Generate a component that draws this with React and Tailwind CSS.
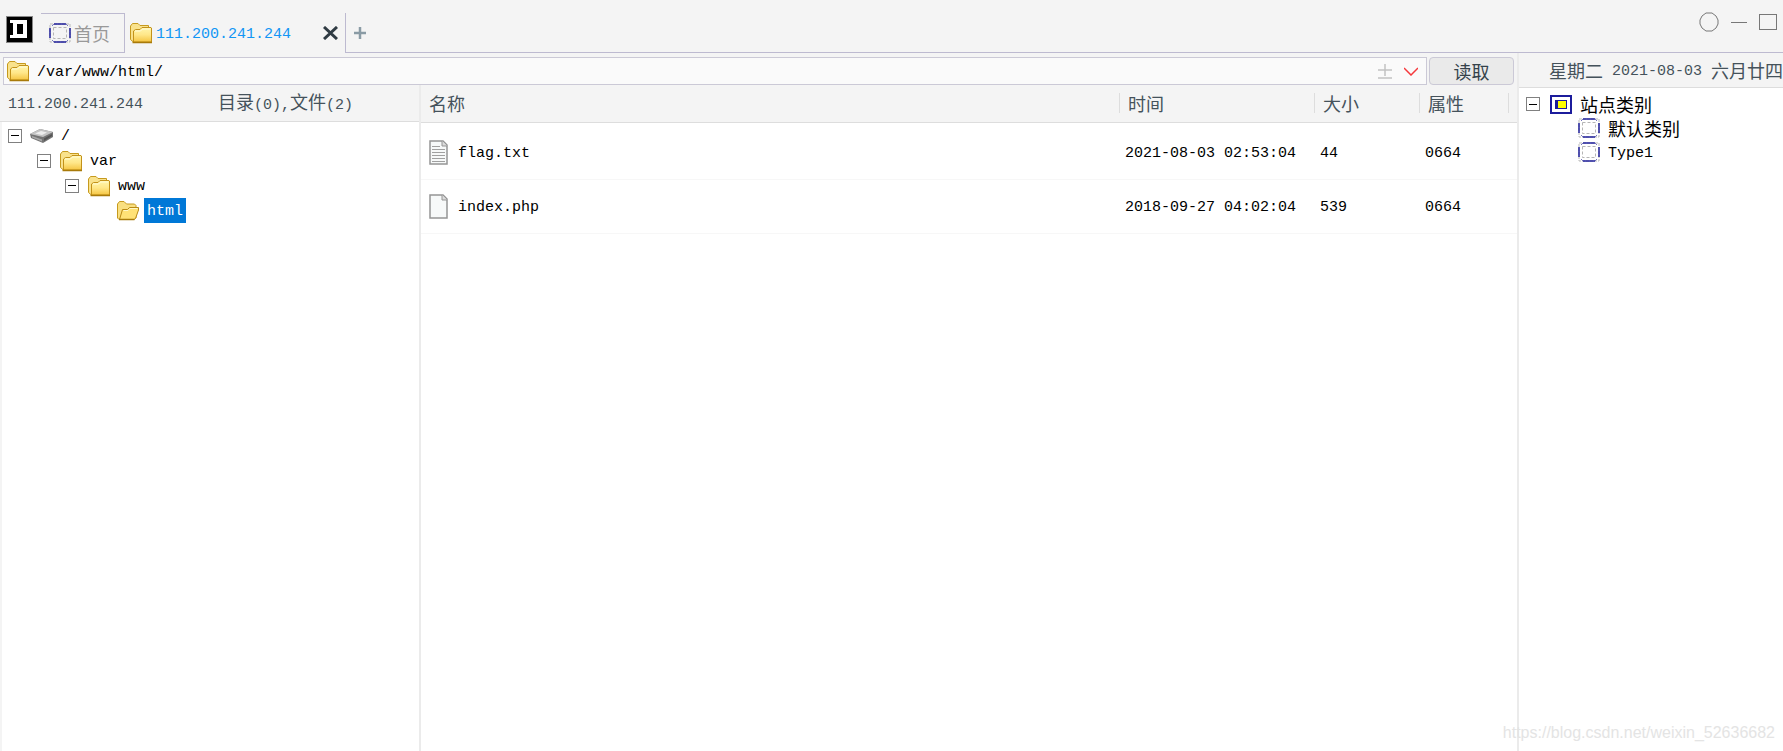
const mono = 'font-["Liberation_Mono","Noto_Sans_CJK_SC",monospace] text-[15px]'
const cjk = 'font-["Noto_Sans_CJK_SC",sans-serif] text-[18px]'

const files = [
  { name: 'flag.txt', time: '2021-08-03 02:53:04', size: '44', mode: '0664', lines: true },
  { name: 'index.php', time: '2018-09-27 04:02:04', size: '539', mode: '0664', lines: false },
]

const tree = [
  { name: '/', pad: 'pl-1.5', icon: 'drive' },
  { name: 'var', pad: 'pl-[35px]', icon: 'folder' },
  { name: 'www', pad: 'pl-[63px]', icon: 'folder' },
  { name: 'html', pad: 'pl-[106px]', icon: 'open', selected: true },
]

function FolderIcon() {
  return (
    <svg width="24" height="22" viewBox="0 0 24 22" className="shrink-0">
      <defs>
        <linearGradient id="folder-front" x1="0" y1="0" x2="0" y2="1">
          <stop offset="0" stopColor="#fff6ae" />
          <stop offset="0.5" stopColor="#ffe789" />
          <stop offset="1" stopColor="#f5c542" />
        </linearGradient>
      </defs>
      <path d="M1.5 17.5V4L3.5 1.5H9L11 3.5H19.5V8L5 20.5Z" fill="#f9e28c" stroke="#c69a1e" />
      <path d="M4.5 20V9L6.5 7.5H11L13 5.5H22L22.5 6V20Z" fill="url(#folder-front)" stroke="#c3921a" />
      <path d="M6 9H11.5L13.5 7H21" fill="none" stroke="#fffbd6" />
      <path d="M3.5 20.5H23" stroke="#a87a0a" strokeWidth="1.5" />
    </svg>
  )
}

function OpenFolderIcon() {
  return (
    <svg width="24" height="22" viewBox="0 0 24 22" className="shrink-0">
      <path d="M1.5 18V4L3.5 1.5H8L10.5 4H18.5L20 5.5V18L3 19.5Z" fill="#f9df80" stroke="#c69a1e" />
      <path d="M3.5 19.5L6.5 9.5H11.5L13.5 7.5H22.5V10L19.5 18.5L18 19.5Z" fill="#ffe276" stroke="#b98a14" />
      <path d="M7.5 10.5H12L14 8.5H21.5" fill="none" stroke="#fff8c8" />
      <path d="M3 19.5H18.5" stroke="#a87c0c" strokeWidth="1.5" />
    </svg>
  )
}

function DriveIcon() {
  return (
    <svg width="24" height="16" viewBox="0 0 24 16" className="shrink-0">
      <path d="M0 6L10 1L23 4V9L13 15L1 10Z" fill="#747474" />
      <path d="M0 6L10 1L23 4L13 9Z" fill="#c4c4c4" />
      <path d="M5 5.5L11 3L17 4.5L12 7Z" fill="#ededed" />
      <path d="M2 8L12 11.5V13.5L2 9.5Z" fill="#a8a8a8" />
      <path d="M14 10.5L22 6V8L14 13Z" fill="#555" />
    </svg>
  )
}

function DashedIcon() {
  return (
    <svg width="22" height="20" viewBox="0 0 22 20" fill="none" className="shrink-0">
      <rect x="1" y="1" width="20" height="18" stroke="#b9b9b9" strokeDasharray="3 1" />
      <rect x="4.5" y="4.5" width="13" height="11" stroke="#b5b5b5" strokeDasharray="3 2" />
      <path d="M5 1H17M5 19H17M1 5V15M21 5V15" stroke="#20209c" strokeWidth="1.5" />
      <path d="M3 3L5 1M17 1L19 3M3 17L5 19M17 19L19 17" stroke="#7777bd" />
    </svg>
  )
}

function SiteIcon() {
  return (
    <svg width="22" height="19" viewBox="0 0 22 19" className="shrink-0">
      <rect x="1" y="1" width="20" height="17" fill="#fff" stroke="#1c1c9c" strokeWidth="2" />
      <rect x="5" y="5" width="12" height="9" fill="#1c1c9c" />
      <rect x="8" y="6" width="8" height="7" fill="#ff0" />
    </svg>
  )
}

function FileIcon({ lines }) {
  return (
    <svg width="19" height="25" viewBox="0 0 19 25" className="shrink-0">
      <path d="M1 1H14L18 5V24H1Z" fill="#f7f9f9" stroke="#959595" strokeWidth="1.5" />
      <path d="M13 1V6H18" fill="#ddd" stroke="#959595" />
      {lines && <path d="M3 6.5H11M3 9.5H16M3 12.5H16M3 15.5H16M3 18.5H16M3 21.5H16" stroke="#a0a0a0" />}
    </svg>
  )
}

function Toggle({ label }) {
  return (
    <button aria-label={label} className="flex size-3.5 shrink-0 items-center justify-center border border-[#808080] bg-white">
      <span className="h-px w-2 bg-black" />
    </button>
  )
}

function TitleBar() {
  return (
    <header className="flex h-[53px] shrink-0 items-stretch">
      <div className="flex w-[41px] shrink-0 border-b border-[#bdbad0] pt-4 pl-1.5">
        <svg width="27" height="27" viewBox="0 0 27 27">
          <rect width="27" height="27" fill="#000" />
          <rect x="0.5" y="0.5" width="26" height="26" fill="none" stroke="#888" />
          <path d="M4 4H21V22H4V19H7V7H4ZM11 8V18H17V8Z" fill="#fff" fillRule="evenodd" />
        </svg>
      </div>
      <nav className="flex shrink-0">
        <button className={`${cjk} mt-[13px] flex w-[84px] items-center gap-[3px] border-t border-r border-b border-[#bdbad0] pl-2 leading-6 text-[#999]`}>
          <DashedIcon />
          首页
        </button>
        <div className="mt-[13px] flex w-[221px] items-center border-r border-[#bdbad0] pl-1">
          <button className={`${mono} flex items-center gap-[3px] text-[#1296f5]`}>
            <FolderIcon />
            <span className="pt-1">111.200.241.244</span>
          </button>
          <button aria-label="关闭" className="ml-8">
            <svg width="15" height="14" viewBox="0 0 15 14" stroke="#2f3b43" strokeWidth="3">
              <path d="M1 1L14 13M14 1L1 13" />
            </svg>
          </button>
        </div>
      </nav>
      <div className="flex grow justify-between border-b border-[#bdbad0]">
        <button aria-label="新建" className="mt-[13px] pl-2">
          <svg width="12" height="12" viewBox="0 0 12 12" stroke="#8a9ba5" strokeWidth="2.5">
            <path d="M6 0V12M0 6H12" />
          </svg>
        </button>
        <div className="flex h-11 items-center gap-3 pr-1.5">
          <button aria-label="设置">
            <svg width="20" height="20" viewBox="0 0 20 20" fill="none" stroke="#777">
              <path d="M7 1H13L17 4L19 8V12L17 16L13 19H7L3 16L1 12V8L3 4Z" />
            </svg>
          </button>
          <button aria-label="最小化" className="flex h-5 w-4 items-center">
            <span className="h-px w-4 bg-[#777]" />
          </button>
          <button aria-label="最大化" className="h-4 w-[18px] border border-[#777]" />
        </div>
      </div>
    </header>
  )
}

function TreePanel() {
  return (
    <section className="flex w-[421px] shrink-0 flex-col border-r-2 border-[#ebebeb] bg-white">
      <div className="flex h-[37px] shrink-0 items-center border-b border-[#ddd] bg-[#f4f4f4] pl-2 text-[#45525b]">
        <span className={`${mono} w-[210px] pt-1`}>111.200.241.244</span>
        <span className={mono}>
          <span className={cjk}>目录</span>(0),<span className={cjk}>文件</span>(2)
        </span>
      </div>
      <ul className="grow border-l-2 border-[#f4f4f4] pt-px">
        {tree.map((node) => (
          <li key={node.name} className={`flex h-[25px] items-center ${node.pad}`}>
            {!node.selected && <Toggle label={node.name} />}
            <span className="ml-2 flex">
              {node.icon === 'drive' && <DriveIcon />}
              {node.icon === 'folder' && <FolderIcon />}
              {node.icon === 'open' && <OpenFolderIcon />}
            </span>
            <span className={`${mono} ml-1 flex h-[25px] items-center px-[3px] pt-1 ${node.selected ? 'bg-[#0078d7] text-white' : ''}`}>
              {node.name}
            </span>
          </li>
        ))}
      </ul>
    </section>
  )
}

function FileTable() {
  return (
    <div className="min-w-0 grow bg-white">
      <table className="w-full table-fixed border-collapse text-left">
        <thead className={`${cjk} bg-[#f4f4f4] text-[#45525b]`}>
          <tr className="h-[37px] border-b border-[#ddd]">
            <th className="p-0 pl-2 leading-5 font-normal">名称</th>
            <th className="w-[195px] p-0 leading-5 font-normal">
              <span className="block border-l border-[#ddd] pl-2">时间</span>
            </th>
            <th className="w-[105px] p-0 leading-5 font-normal">
              <span className="block border-l border-[#ddd] pl-2">大小</span>
            </th>
            <th className="w-[98px] p-0 leading-5 font-normal">
              <span className="mr-2 block border-x border-[#ddd] pl-2">属性</span>
            </th>
          </tr>
        </thead>
        <tbody className={`${mono} before:block before:h-[3px]`}>
          {files.map((file) => (
            <tr key={file.name} className="h-[54px] border-b border-[#f7f7f7]">
              <td className="p-0 pl-2">
                <span className="flex items-center gap-2.5">
                  <FileIcon lines={file.lines} />
                  <span className="pt-1">{file.name}</span>
                </span>
              </td>
              <td className="p-0 pt-1 pl-1.5">{file.time}</td>
              <td className="p-0 pt-1 pl-1.5">{file.size}</td>
              <td className="p-0 pt-1 pl-1.5">{file.mode}</td>
            </tr>
          ))}
        </tbody>
      </table>
    </div>
  )
}

function SitePanel() {
  return (
    <aside className="flex w-[266px] shrink-0 flex-col border-l-2 border-[#ebebeb] bg-white">
      <div className={`${mono} flex h-[35px] shrink-0 items-center justify-end gap-[9px] border-b border-[#ddd] bg-[#f4f4f4] whitespace-nowrap text-[#45525b]`}>
        <span className={cjk}>星期二</span>
        <span className="pt-1">2021-08-03</span>
        <span className={cjk}>六月廿四</span>
      </div>
      <ul className="pt-1">
        <li className="flex h-6 items-center pl-[7px]">
          <Toggle label="站点类别" />
          <span className="ml-2.5 flex">
            <SiteIcon />
          </span>
          <span className={`${cjk} ml-2 leading-6`}>站点类别</span>
        </li>
        <li className="flex h-6 items-center gap-2 pl-[59px]">
          <DashedIcon />
          <span className={`${cjk} leading-6`}>默认类别</span>
        </li>
        <li className="flex h-6 items-center gap-2 pl-[59px]">
          <DashedIcon />
          <span className={`${mono} pt-1`}>Type1</span>
        </li>
      </ul>
    </aside>
  )
}

function App() {
  return (
    <div className="relative flex h-screen flex-col overflow-hidden bg-[#f4f4f4] text-black">
      <TitleBar />
      <div className="flex grow">
        <main className="flex min-w-0 grow flex-col">
          <div className="flex h-8 shrink-0 items-end gap-0.5 pr-[3px] pl-[3px]">
            <div className="flex h-7 grow items-center border border-[#cbc9d6] bg-[#fafafa] pl-0.5">
              <FolderIcon />
              <input aria-label="路径" defaultValue="/var/www/html/" className={`${mono} ml-[7px] grow bg-transparent pt-1 outline-none`} />
              <button aria-label="书签" className="mr-3">
                <svg width="14" height="16" viewBox="0 0 14 16" stroke="#c2c2c2" strokeWidth="1.5">
                  <path d="M7 1V13M0 7H14M0 15H14" />
                </svg>
              </button>
              <button aria-label="历史" className="mr-2">
                <svg width="14" height="9" viewBox="0 0 14 9" fill="none" stroke="#f5383c" strokeWidth="1.5">
                  <path d="M0 1L7 8L14 1" />
                </svg>
              </button>
            </div>
            <button className={`${cjk} h-7 w-[85px] rounded-sm border border-[#cbc9d6] bg-[#eaeaea] leading-6 text-[#35424b]`}>读取</button>
          </div>
          <div className="flex grow">
            <TreePanel />
            <FileTable />
          </div>
        </main>
        <SitePanel />
      </div>
      <a href="https://blog.csdn.net/weixin_52636682" className='absolute right-2 bottom-1.5 font-["Liberation_Sans",sans-serif] text-[16px] text-[#e4e4e4]'>
        https://blog.csdn.net/weixin_52636682
      </a>
    </div>
  )
}

export default App
